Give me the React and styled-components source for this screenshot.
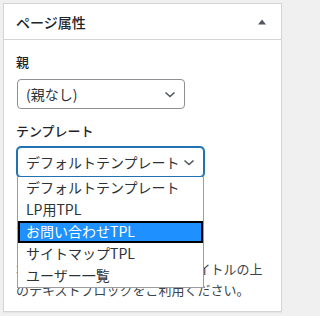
import React from "react";
import styled, { createGlobalStyle } from "styled-components";

const GlobalStyle = createGlobalStyle`
  html, body {
    margin: 0;
    padding: 0;
    background: #f0f0f1;
  }
  body {
    font-family: "Noto Sans CJK JP", "Noto Sans", sans-serif;
    color: #3c434a;
  }
  * { box-sizing: border-box; }
`;

const Page = styled.div`
  padding: 3px;
`;

const Postbox = styled.section`
  width: 279px;
  height: 309px;
  background: #fff;
  border: 1px solid #d3d4d7;
  box-shadow: 0 1px 1px rgba(0, 0, 0, 0.04);
`;

const Header = styled.header`
  display: flex;
  align-items: center;
  justify-content: space-between;
  height: 36px;
  padding: 0 15px 0 12px;
  border-bottom: 1px solid #d3d4d7;
`;

const Title = styled.h2`
  margin: 0;
  font-size: 14px;
  font-weight: 500;
  line-height: 20px;
  color: #1d2327;
`;

const Toggle = styled.button`
  display: flex;
  align-items: center;
  justify-content: center;
  width: 8px;
  height: 8px;
  padding: 0;
  border: 0;
  background: none;
`;

const Inside = styled.div`
  padding: 0 12px 12px;
`;

const Label = styled.p`
  margin: ${(p) => p.$top}px 0 0;
  font-size: 13px;
  font-weight: 500;
  line-height: 20px;
  color: #1d2327;
`;

const SelectWrap = styled.div`
  position: relative;
  margin: ${(p) => p.$top}px 0 0 1px;
  width: ${(p) => p.$width}px;
`;

const Select = styled.div`
  position: relative;
  height: 30px;
  padding: 0 24px 0 8px;
  border: 1px solid ${(p) => (p.$focus ? "#2271b1" : "#8c8f94")};
  border-radius: 4px;
  box-shadow: ${(p) => (p.$focus ? "0 0 0 1px #2271b1" : "none")};
  background: #fff;
  font-size: 14px;
  line-height: 28px;
  color: #2c3338;
  white-space: nowrap;
`;

const Chevron = styled.svg`
  position: absolute;
  right: 6px;
  top: 6px;
`;

const List = styled.ul`
  position: absolute;
  top: 100%;
  left: 0;
  z-index: 2;
  width: 100%;
  margin: 0;
  padding: 0;
  list-style: none;
  background: #fff;
  border: 1px solid #9a9ca0;
  border-top: 0;
`;

const Option = styled.li`
  height: 22px;
  font-size: 14px;
  line-height: 21px;
  white-space: nowrap;
  color: ${(p) => (p.$active ? "#fff" : "#2c3338")};
  background: ${(p) => (p.$active ? "#1e90ff" : "transparent")};
  outline: ${(p) => (p.$active ? "2px solid #000" : "none")};
  outline-offset: -2px;
  padding-left: 8px;
`;

const Help = styled.p`
  margin: 16px 0 0;
  font-size: 13px;
  line-height: 21.5px;
  color: #3c434a;
  white-space: nowrap;
`;

function SelectBox({ value, width, top, focus, options, active }) {
  return (
    <SelectWrap $width={width} $top={top}>
      <Select $focus={focus}>
        {value}
        <Chevron width="16" height="16" viewBox="0 0 16 16">
          <polyline
            points="3.5,6.5 8,10.5 12.5,6.5"
            fill="none"
            stroke="#50575e"
            strokeWidth="1.6"
          />
        </Chevron>
      </Select>
      {options && (
        <List>
          {options.map((o) => (
            <Option key={o} $active={o === active}>
              {o}
            </Option>
          ))}
        </List>
      )}
    </SelectWrap>
  );
}

const templates = [
  "デフォルトテンプレート",
  "LP用TPL",
  "お問い合わせTPL",
  "サイトマップTPL",
  "ユーザー一覧",
];

export default function App() {
  return (
    <Page>
      <GlobalStyle />
      <Postbox>
        <Header>
          <Title>ページ属性</Title>
          <Toggle aria-label="パネルを閉じる">
            <svg width="8" height="6" viewBox="0 0 8 6">
              <polygon points="0,5.5 4,0.5 8,5.5" fill="#50575e" />
            </svg>
          </Toggle>
        </Header>
        <Inside>
          <Label $top={12}>親</Label>
          <SelectBox value="(親なし)" width={168} top={7} />
          <Label $top={12}>テンプレート</Label>
          <SelectBox
            value="デフォルトテンプレート"
            width={187}
            top={6}
            focus
            options={templates}
            active="お問い合わせTPL"
          />
          <Help>
            テンプレートを選択すると、
            <br />
            ページの表示形式が切り替わり
            <br />
            ます。見出しを追加するときは
            <br />
            本文の先頭ではなく、ページタイトルの上
            <br />
            のテキストブロックをご利用ください。
          </Help>
        </Inside>
      </Postbox>
    </Page>
  );
}
